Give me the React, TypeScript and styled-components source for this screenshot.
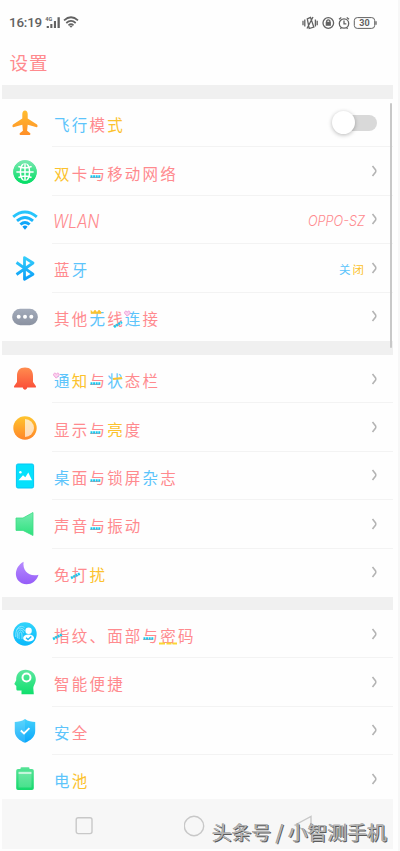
import React from "react";
import styled, { createGlobalStyle } from "styled-components";

const P = "#ff8a8e";
const B = "#5cc4fb";
const Y = "#fcc22d";

type Deco = "dots" | "slant" | "slantLeft" | "heart" | "crown" | "underline" | "dash";
type Glyph = [string, string, Deco?];

const Global = createGlobalStyle`
  * { box-sizing: border-box; }
  body { margin: 0; background: #fff; font-family: "Noto Sans CJK SC", sans-serif; }
`;

const Page = styled.div`
  position: relative;
  width: 400px;
  height: 851px;
  overflow: hidden;
  padding-left: 2px;
  background: #fefefe;
  border-right: 2px solid #f7f7f7;
`;
const Screen = styled.div`
  width: 391px;
  height: 849px;
  display: flex;
  flex-direction: column;
`;
const StatusBar = styled.div`
  height: 46px;
  flex: none;
  padding: 0 15px 0 7px;
  display: flex;
  align-items: center;
  color: #626262;
`;
const Clock = styled.span`
  width: 36px;
  font: 500 13.4px/16px Roboto, sans-serif;
  letter-spacing: -0.2px;
`;
const StatusLeft = styled.svg`
  width: 36px;
  height: 16px;
`;
const StatusRight = styled.svg`
  width: 76px;
  height: 16px;
  margin-left: auto;
`;
const BatteryText = styled.text`
  font: 700 9px Roboto, sans-serif;
`;
const Header = styled.div`
  height: 39px;
  flex: none;
  display: flex;
  align-items: center;
  padding: 0 0 11px 7px;
`;
const Gap = styled.div<{ $h: number }>`
  height: ${(p) => p.$h}px;
  flex: none;
  background: #f0f0f0;
`;
const List = styled.div`
  flex: 1;
  min-height: 0;
  overflow: hidden;
`;
const Row = styled.div`
  height: 48.4px;
  display: flex;
  align-items: stretch;
  padding-left: 9px;
`;
const Icon = styled.svg`
  width: 28px;
  height: 28px;
  flex: none;
  align-self: center;
`;
const Body = styled.div<{ $last?: boolean }>`
  flex: 1;
  margin-left: 13px;
  padding: 0 15px 0 1px;
  display: flex;
  align-items: center;
  border-bottom: 1px solid ${(p) => (p.$last ? "transparent" : "#f3f3f3")};
`;
const Label = styled.span<{ $size: number }>`
  display: flex;
  padding-top: 3px;
  font-size: ${(p) => p.$size}px;
  line-height: 24px;
  font-weight: 400;
`;
const Cell = styled.span<{ $c: string; $w: number }>`
  position: relative;
  width: ${(p) => p.$w}px;
  text-align: center;
  color: ${(p) => p.$c};
`;
const DecoSvg = styled.svg`
  position: absolute;
  left: 0;
  top: 2px;
  width: 20px;
  height: 22px;
  overflow: visible;
`;
const Latin = styled.span<{ $size: number; $scale: number; $right?: boolean }>`
  padding-top: ${(p) => (p.$right ? 4 : 6)}px;
  font: italic 300 ${(p) => p.$size}px/24px Inter, sans-serif;
  color: ${P};
  transform: scaleX(${(p) => p.$scale});
  transform-origin: ${(p) => (p.$right ? "right" : "left")};
`;
const Trail = styled.div`
  margin-left: auto;
  display: flex;
  align-items: center;
  gap: 6px;
`;
const Chevron = styled.svg`
  width: 7px;
  height: 12px;
`;
const Track = styled.div`
  width: 43px;
  height: 16px;
  margin-right: 1px;
  border-radius: 8px;
  background: #d9d9d9;
  display: flex;
  align-items: center;
`;
const Knob = styled.div`
  width: 23px;
  height: 23px;
  flex: none;
  margin-left: -2px;
  border-radius: 50%;
  background: #fff;
  box-shadow: 0 1px 4px rgba(0, 0, 0, 0.28);
`;
const Nav = styled.div`
  height: 50px;
  flex: none;
  background: #f7f7f7;
  display: flex;
  align-items: center;
  padding: 3px 0 0 73px;
  gap: 87px;
`;
const NavIcon = styled.svg`
  width: 22px;
  height: 22px;
  fill: none;
  stroke: #c8c8c8;
  stroke-width: 1.4;
`;
const Scrollbar = styled.div`
  position: absolute;
  left: 390px;
  top: 103px;
  width: 2px;
  height: 245px;
  border-radius: 1px;
  background: #c8c8c8;
`;
const Watermark = styled.div`
  position: absolute;
  left: 212px;
  top: 818px;
  font-size: 19.8px;
  line-height: 28px;
  white-space: nowrap;
  color: #b4b4b4;
  text-shadow: 1px 1px 0 #5c5c5c, -0.5px -0.5px 0 #8a8a8a;
`;

function Decoration({ kind }: { kind: Deco }) {
  const dots = { stroke: "#18c9ef", strokeWidth: 2.6, strokeDasharray: "2 0.6", fill: "none" };
  return (
    <DecoSvg viewBox="0 0 20 22">
      {kind === "dots" && <path d="M2.5 13.5H12.7" {...dots} />}
      {kind === "slant" && <path d="M8 19L16 14" {...dots} />}
      {kind === "slantLeft" && <path d="M0 14L9 9.5" {...dots} />}
      {kind === "heart" && (
        <path d="M3.3 8.2L.8 5.5C-.3 3.4 2.4 2.2 3.3 4.2C4.5 2 7 3.6 5.8 5.6Z" fill="#fbd3ee" stroke="#ee94d5" strokeWidth=".9" />
      )}
      {kind === "crown" && <path d="M3 5.5V2.5L5 4.5L7 2L9 4.5L11 2L13 4V5.5Z" fill={Y} stroke={Y} strokeWidth=".6" />}
      {kind === "underline" && <path d="M0 18.5H18" stroke="#fbd733" strokeWidth="2" strokeDasharray="6 1.5 5 1 5" />}
      {kind === "dash" && <path d="M7 9L16 8" stroke={Y} strokeWidth="2" />}
    </DecoSvg>
  );
}

function Text({ glyphs, size = 15.5, pitch = 17.7 }: { glyphs: Glyph[]; size?: number; pitch?: number }) {
  return (
    <Label $size={size}>
      {glyphs.map(([ch, color, deco], i) => (
        <Cell key={i} $c={color} $w={pitch}>
          {ch}
          {deco && <Decoration kind={deco} />}
        </Cell>
      ))}
    </Label>
  );
}

function Gradient({ id, from, to }: { id: string; from: string; to: string }) {
  return (
    <linearGradient id={id} x1="0" y1="0" x2="0" y2="1">
      <stop stopColor={from} />
      <stop offset="1" stopColor={to} />
    </linearGradient>
  );
}

const icons: Record<string, React.ReactNode> = {
  plane: (
    <>
      <Gradient id="plane" from="#ffbd2e" to="#ff8f28" />
      <path fill="url(#plane)" d="M14 1.5C15.6 1.5 16.7 3.2 16.7 5V9.5L26 15.6C26.8 16.3 26.7 18.5 25.8 18.2L16.7 15.8L16.1 21.8L19 24C19.7 24.7 19.4 26 18.6 26H9.4C8.6 26 8.3 24.7 9 24L11.9 21.8L11.3 15.8L2.2 18.2C1.3 18.5 1.2 16.3 2 15.6L11.3 9.5V5C11.3 3.2 12.4 1.5 14 1.5Z" />
    </>
  ),
  globe: (
    <>
      <Gradient id="globe" from="#73e8ac" to="#08de68" />
      <circle cx="14" cy="14" r="11.7" fill="url(#globe)" />
      <g fill="none" stroke="#fff" strokeWidth="1.5">
        <ellipse cx="14" cy="14" rx="4.6" ry="9" />
        <path d="M14 5V23M5 14H23M7 8.3Q14 11.5 21 8.3M7 19.7Q14 16.5 21 19.7" />
      </g>
      <circle cx="14" cy="14" r="10.2" fill="none" stroke="url(#globe)" strokeWidth="3" />
    </>
  ),
  wifi: (
    <g fill="none" strokeWidth="2.9">
      <path d="M2.2 10.9Q14 1.2 25.8 10.9" stroke="#27c5fb" />
      <path d="M6 14.9Q14 8.1 22 14.9" stroke="#1bb6fb" />
      <path d="M9.4 18.5Q14 14.4 18.6 18.5" stroke="#10a6fa" />
      <path d="M11.4 20.8Q14 18 16.6 20.8L14 23.8Z" fill="#0799f7" stroke="none" />
    </g>
  ),
  bluetooth: (
    <>
      <Gradient id="bt" from="#35cdfa" to="#0b9ff8" />
      <path d="M5.5 8.5L22 20.2L13.5 25.2V3.6L22 9L5.5 20.5" fill="none" stroke="url(#bt)" strokeWidth="2.8" strokeLinejoin="round" />
    </>
  ),
  more: (
    <>
      <Gradient id="more" from="#a3abba" to="#8b92a1" />
      <rect x="1.2" y="5.8" width="25.6" height="16.4" rx="8" fill="url(#more)" />
      <g fill="#fff">
        <circle cx="7.7" cy="13.7" r="2" />
        <circle cx="14" cy="13.7" r="2" />
        <circle cx="20.3" cy="13.7" r="2" />
      </g>
    </>
  ),
  bell: (
    <>
      <Gradient id="bell" from="#ff8c4e" to="#fa4b38" />
      <path fill="url(#bell)" d="M14 2.6C19.5 2.6 22 6 22 11V17L24.8 21C25.3 22 25 22.6 24 22.6H16.2C16 24 15 24.7 14 24.7S12 24 11.8 22.6H4C3 22.6 2.7 22 3.2 21L6 17V11C6 6 8.5 2.6 14 2.6Z" />
    </>
  ),
  contrast: (
    <>
      <Gradient id="sun" from="#ffc52e" to="#ff8529" />
      <circle cx="14" cy="14" r="11.7" fill="url(#sun)" />
      <path d="M14 5A9 9 0 0 1 14 23Z" fill="#fff" opacity=".68" />
    </>
  ),
  picture: (
    <>
      <rect x="5.4" y="2" width="17.2" height="24" rx="1.6" fill="#05e1fc" stroke="#05c6f4" />
      <path d="M7.5 18.3L12 13.2L14.3 15.2L17.3 10.5L21 18.3Z" fill="#fff" />
      <circle cx="9.4" cy="10.2" r="1.2" fill="#fff" />
    </>
  ),
  speaker: (
    <>
      <Gradient id="speaker" from="#76ebb0" to="#2de27d" />
      <path d="M5 8H12L22 2.5V25.5L12 20.4H5Z" fill="url(#speaker)" stroke="#3cdd84" strokeWidth=".8" strokeLinejoin="round" />
    </>
  ),
  moon: (
    <>
      <Gradient id="moon" from="#b78cff" to="#955cf8" />
      <path d="M12.6 2.8C11.2 12 18.4 18.3 27.5 15.8C25 24.5 16.5 27 10.8 24.2C2.6 20.3 2.8 8.3 12.6 2.8Z" fill="url(#moon)" />
    </>
  ),
  finger: (
    <>
      <Gradient id="finger" from="#30d4fb" to="#0bb9fb" />
      <circle cx="14" cy="14" r="11.7" fill="url(#finger)" />
      <g fill="none" stroke="#9ceaff" strokeWidth=".8">
        <path d="M4.8 17C4.5 11 6 8.2 9.6 8.2Q12.8 8.2 13.7 11M6.5 18.2C6 13 7 10 9.5 10Q12 10 12.5 12.8M8.2 19C7.8 15 7.8 12 9.6 12Q11.3 12 11 19M5.4 10.7C7 6 11 5.3 13.5 7.6" />
      </g>
      <circle cx="17.6" cy="10.7" r="3.2" fill="#fff" />
      <ellipse cx="17.6" cy="18" rx="5.5" ry="3.6" fill="#fff" />
      <path d="M15 17.8L17 19.5L20.3 16.5" fill="none" stroke="#1db9f5" strokeWidth="1.4" />
    </>
  ),
  head: (
    <>
      <Gradient id="head" from="#5de7a0" to="#0fdf6c" />
      <path d="M14.5 1.7C20.3 1.7 24.8 5.6 24.8 11.2C24.8 15.5 22.3 17 22.3 20.3L22.8 26.2H10.5V22.5H6.5C5 22.5 5.4 20.5 5.3 18L3.3 16L5.2 12.2C4.8 5.5 9 1.7 14.5 1.7Z" fill="url(#head)" />
      <circle cx="15.5" cy="9.5" r="4" fill="none" stroke="#fff" strokeWidth="2" />
    </>
  ),
  shield: (
    <>
      <Gradient id="shield" from="#43d0fb" to="#0aa7fb" />
      <path d="M14 2C17 4.3 20.8 4.8 24.2 5V14C24.2 20 19.5 23.5 14 25.8C8.5 23.5 3.8 20 3.8 14V5C7.2 4.8 11 4.3 14 2Z" fill="url(#shield)" />
      <path d="M14 2V25.8C8.5 23.5 3.8 20 3.8 14V5C7.2 4.8 11 4.3 14 2Z" fill="#fff" opacity=".12" />
      <path d="M9.8 13.5L13 16.5L18.4 11.2" fill="none" stroke="#fff" strokeWidth="1.8" />
    </>
  ),
  battery: (
    <>
      <Gradient id="batt" from="#57e397" to="#14d96c" />
      <path d="M9.5 4V3.2Q9.5 2.3 10.5 2.3H17.5Q18.5 2.3 18.5 3.2V4H21Q22.8 4 22.8 5.8V23.2Q22.8 25 21 25H7Q5.2 25 5.2 23.2V5.8Q5.2 4 7 4Z" fill="url(#batt)" />
      <path d="M7.5 9.5H20.5V22.5H7.5Z" fill="#fff" opacity=".2" />
      <path d="M7.5 6.8H20.5V9.2H7.5Z" fill="#fff" opacity=".68" />
    </>
  ),
};

interface Item {
  icon: string;
  text?: Glyph[];
  latin?: string;
  value?: React.ReactNode;
  toggle?: boolean;
}

const groups: Item[][] = [
  [
    { icon: "plane", text: [["飞", B], ["行", B], ["模", P], ["式", Y]], toggle: true },
    { icon: "globe", text: [["双", Y], ["卡", P], ["与", P, "dots"], ["移", P], ["动", P], ["网", P], ["络", P]] },
    { icon: "wifi", latin: "WLAN", value: <Latin $size={13.8} $scale={0.92} $right>OPPO-SZ</Latin> },
    { icon: "bluetooth", text: [["蓝", P], ["牙", B]], value: <Text size={11.5} pitch={13.5} glyphs={[["关", B], ["闭", Y]]} /> },
    { icon: "more", text: [["其", P], ["他", P], ["无", B, "crown"], ["线", P, "slant"], ["连", B, "heart"], ["接", P]] },
  ],
  [
    { icon: "bell", text: [["通", B, "heart"], ["知", Y], ["与", P, "dots"], ["状", B, "dash"], ["态", P], ["栏", P]] },
    { icon: "contrast", text: [["显", P], ["示", P], ["与", P, "dots"], ["亮", Y], ["度", P]] },
    { icon: "picture", text: [["桌", B], ["面", P], ["与", P, "dots"], ["锁", P], ["屏", P], ["杂", B], ["志", P]] },
    { icon: "speaker", text: [["声", P], ["音", P], ["与", P, "dots"], ["振", P], ["动", P]] },
    { icon: "moon", text: [["免", P], ["打", P, "slantLeft"], ["扰", Y]] },
  ],
  [
    { icon: "finger", text: [["指", P, "slantLeft"], ["纹", P], ["、", P], ["面", P], ["部", P], ["与", P, "dots"], ["密", P, "underline"], ["码", P]] },
    { icon: "head", text: [["智", P], ["能", P], ["便", P], ["捷", P]] },
    { icon: "shield", text: [["安", B], ["全", P]] },
    { icon: "battery", text: [["电", B], ["池", Y]] },
  ],
];

function SettingRow({ item, last }: { item: Item; last: boolean }) {
  return (
    <Row>
      <Icon viewBox="0 0 28 28">{icons[item.icon]}</Icon>
      <Body $last={last}>
        {item.text && <Text glyphs={item.text} />}
        {item.latin && <Latin $size={18} $scale={0.87}>{item.latin}</Latin>}
        <Trail>
          {item.value}
          {item.toggle ? (
            <Track>
              <Knob />
            </Track>
          ) : (
            <Chevron viewBox="0 0 7 12">
              <path d="M1.5 1L4.6 5Q5.1 6 4.6 7L1.5 11" fill="none" stroke="#b4b4b4" strokeWidth="1.6" />
            </Chevron>
          )}
        </Trail>
      </Body>
    </Row>
  );
}

export default function App() {
  return (
    <>
      <Global />
      <Page>
        <Screen>
          <StatusBar>
            <Clock>16:19</Clock>
            <StatusLeft viewBox="0 0 36 16" fill="currentColor">
              <text x="0.3" y="6" fontSize="5.5" fontWeight="700" fontFamily="Roboto">4G</text>
              <path d="M1.7 11H3.9V13H1.7ZM5.3 9H7.4V13H5.3ZM8.9 6H11V13H8.9ZM12.5 2.3H14.8V13H12.5Z" />
              <g fill="none" stroke="currentColor" strokeWidth="1.7">
                <path d="M19 5.3Q26 -.8 33 5.3M21.3 8Q26 3.8 30.7 8M23.5 10.3Q26 8 28.5 10.3" />
              </g>
              <path d="M24.4 11L26 12.8L27.6 11Q26 9.8 24.4 11Z" />
            </StatusLeft>
            <StatusRight viewBox="0 0 76 16" fill="none" stroke="currentColor" strokeWidth="1.3">
              <path d="M1 5.8V10.2M2.8 4.5V11.5M15.2 5.8V10.2M13.4 4.5V11.5M5.3 3.8L8.5 2.4L11.8 12L7.2 13.5ZM5 13.5L11 2" />
              <circle cx="26.3" cy="8" r="5.3" />
              <path d="M24.7 7V5.8Q26.3 3.8 27.9 5.8V7" />
              <path d="M23.7 6.8H28.9V10.8H23.7Z" fill="currentColor" stroke="none" />
              <circle cx="42" cy="8.5" r="4.7" />
              <path d="M42 5.5V8.8H44.3M37 4.2L39.3 2.5M47 4.2L44.7 2.5M38.5 13.8L39.3 12.5M45.5 13.8L44.7 12.5" />
              <rect x="52.3" y="2.6" width="20.4" height="10.8" rx="3" strokeWidth="1" />
              <path d="M74 6.2V9.8" />
              <BatteryText x="57.3" y="11.2" fill="currentColor" stroke="none">30</BatteryText>
            </StatusRight>
          </StatusBar>
          <Header>
            <Text size={18.5} pitch={19.5} glyphs={[["设", P], ["置", P]]} />
          </Header>
          <Gap $h={14} />
          <List>
            {groups.map((g, gi) => (
              <React.Fragment key={gi}>
                {gi > 0 && <Gap $h={gi === 1 ? 14 : 13} />}
                {g.map((item, i) => (
                  <SettingRow key={item.icon} item={item} last={i === g.length - 1} />
                ))}
              </React.Fragment>
            ))}
          </List>
          <Nav>
            <NavIcon viewBox="0 0 22 22">
              <rect x="1.2" y="2.8" width="15.8" height="15.8" rx="2" />
            </NavIcon>
            <NavIcon viewBox="0 0 22 22">
              <circle cx="10" cy="11" r="9.7" />
            </NavIcon>
            <NavIcon viewBox="0 0 22 22">
              <path d="M2 10L18 1.5V19Z" />
            </NavIcon>
          </Nav>
        </Screen>
        <Scrollbar />
        <Watermark>头条号 / 小智测手机</Watermark>
      </Page>
    </>
  );
}
